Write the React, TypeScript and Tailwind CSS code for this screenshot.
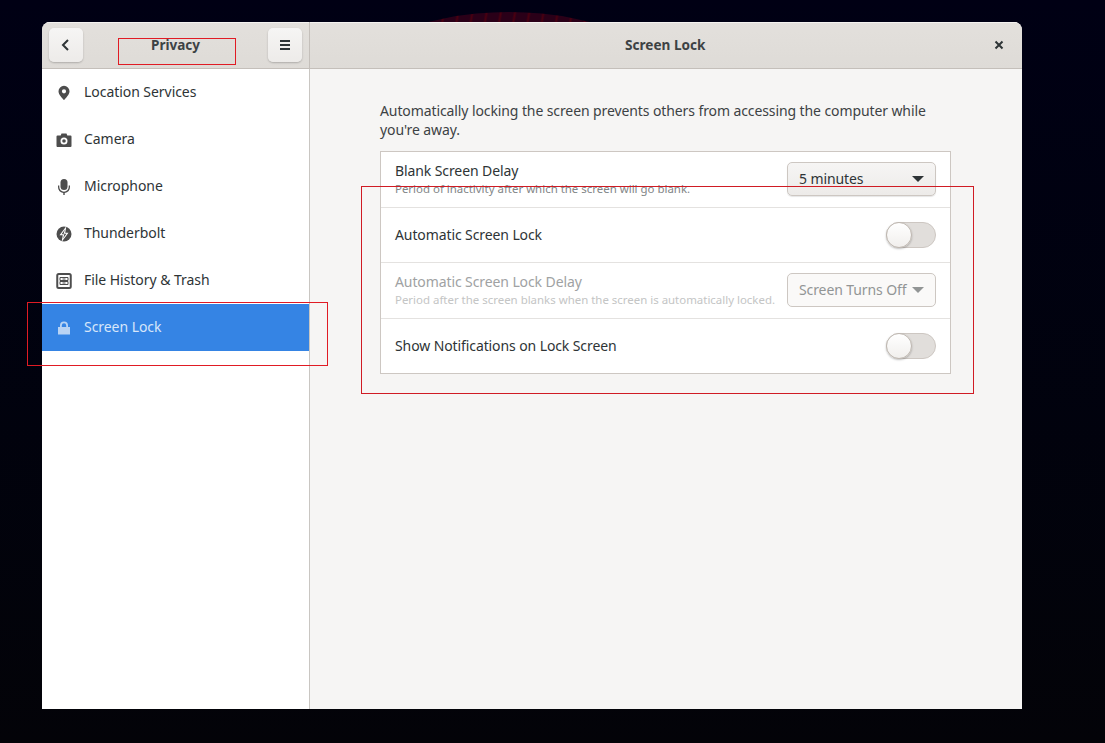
const font = "font-['Noto_Sans','Open_Sans',sans-serif]";

function LocationIcon() {
  return (
    <svg width="16" height="16" viewBox="0 0 16 16" fill="#4d4d4d">
      <path fillRule="evenodd" d="M8 .8a5.500 5.500 0 0 0-5.500 5.500C2.500 9.500 6 13 8 15.200c2-2.200 5.500-5.700 5.500-8.900A5.500 5.500 0 0 0 8 .8zm0 3.400a2.100 2.100 0 1 1 0 4.200 2.100 2.100 0 0 1 0-4.200z" />
    </svg>
  );
}

function CameraIcon() {
  return (
    <svg width="16" height="16" viewBox="0 0 16 16" fill="#4d4d4d">
      <path fillRule="evenodd" d="M5.500 1.500 4.700 3.500H1.500a1 1 0 0 0-1 1V14a1 1 0 0 0 1 1h13a1 1 0 0 0 1-1V4.500a1 1 0 0 0-1-1h-3.200l-.8-2h-5zM8 5.500a3.500 3.500 0 1 1 0 7 3.500 3.500 0 0 1 0-7zm0 1.700a1.800 1.800 0 1 0 0 3.600 1.800 1.800 0 0 0 0-3.600z" />
    </svg>
  );
}

function MicIcon() {
  return (
    <svg width="16" height="16" viewBox="0 0 16 16" fill="#4d4d4d">
      <rect x="4.500" y="0" width="7" height="11" rx="3.500" />
      <path d="M2 6.500h1.300V8a4.700 4.700 0 0 0 9.400 0V6.500H14V8a6 6 0 0 1-5.300 5.900V16H7.300v-2.100A6 6 0 0 1 2 8z" />
    </svg>
  );
}

function BoltIcon() {
  return (
    <svg width="16" height="16" viewBox="0 0 16 16">
      <circle cx="8" cy="8" r="7.500" fill="#4d4d4d" />
      <path d="M10.500 0 3.500 9.300h3.300L5.500 16l7-9.300H9.200z" fill="#fff" />
      <path d="M9 3.500 5.600 8.200h2.800L7 12.500l3.400-4.700H7.600z" fill="#4d4d4d" />
    </svg>
  );
}

function FileIcon() {
  return (
    <svg width="16" height="16" viewBox="0 0 16 16" fill="none" stroke="#4d4d4d">
      <rect x="1.250" y="1" width="13.500" height="14" rx="1.500" strokeWidth="2" />
      <path d="M4 7.500h8M4 4.500v3M12 4.500v3M4 4.500h8M4 8.500h8v3H4zM6.500 6h3M6.500 10h3" strokeWidth="1" />
    </svg>
  );
}

function LockIcon() {
  return (
    <svg width="16" height="16" viewBox="0 0 16 16" fill="#b8d3f4">
      <path fillRule="evenodd" d="M8 1.500a4 4 0 0 0-4 4V7H2v7.500h12V7h-2V5.500a4 4 0 0 0-4-4zM8 3.300a2.200 2.200 0 0 1 2.200 2.200V7H5.800V5.500A2.200 2.200 0 0 1 8 3.300z" />
    </svg>
  );
}

function HeaderButton({ children }: { children: React.ReactNode }) {
  return (
    <button className="flex h-[34px] w-[34px] items-center justify-center rounded-[5px] bg-gradient-to-b from-[#f6f5f4] to-[#edebe9] shadow-[0_1px_2px_rgba(0,0,0,0.22)]">
      {children}
    </button>
  );
}

function SidebarItem({ icon, label, active }: { icon: React.ReactNode; label: string; active?: boolean }) {
  return (
    <div className={`flex h-[47px] items-center gap-[12px] pl-[14px] text-[14px] tracking-[-0.05px] ${active ? "bg-[#3584e4] text-[#d7e6fa]" : "text-[#2e3436]"}`}>
      {icon}
      <span className="pb-[2px]">{label}</span>
    </div>
  );
}

function Switch() {
  return (
    <div className="h-[26px] w-[50px] rounded-full border border-[#cdc7c2] bg-[#e1dedb]">
      <div className="-ml-px -mt-px h-[26px] w-[26px] rounded-full border border-[#bfb8b1] bg-gradient-to-b from-white to-[#f1efed] shadow-[0_1px_2px_rgba(0,0,0,0.25)]" />
    </div>
  );
}

function ComboBox({ label, disabled }: { label: string; disabled?: boolean }) {
  return (
    <div className={`mb-[2px] flex h-[34px] w-[149px] items-center justify-between rounded-[5px] border border-[#cdc7c2] pl-[11px] pr-[11px] text-[14px] tracking-[-0.1px] ${disabled ? "bg-[#faf9f8] text-[#929595]" : "bg-gradient-to-b from-[#f6f5f4] to-[#edebe9] text-[#2e3436] shadow-[0_1px_1px_rgba(0,0,0,0.1)]"}`}>
      <span className="whitespace-nowrap">{label}</span>
      <svg width="12" height="6" viewBox="0 0 12 6" fill={disabled ? "#929595" : "#2e3436"}>
        <path d="M0 0h12L6 6z" />
      </svg>
    </div>
  );
}

function SettingRow({ title, subtitle, control, disabled, rowClass }: { title: string; subtitle?: string; control: React.ReactNode; disabled?: boolean; rowClass: string }) {
  return (
    <div className={`flex items-center justify-between pl-[14px] pr-[14px] ${rowClass}`}>
      <div className={`flex flex-col ${subtitle ? "pb-[3px]" : "pb-[2px]"}`}>
        <span className={`text-[14px] leading-[19px] tracking-[-0.1px] ${disabled ? "text-[#a0a2a3]" : "text-[#2e3436]"}`}>{title}</span>
        {subtitle && (
          <span className={`mt-px text-[11.450px] leading-[15px] ${disabled ? "text-[#c4c5c5]" : "text-[#828687]"}`}>{subtitle}</span>
        )}
      </div>
      {control}
    </div>
  );
}

export default function App() {
  return (
    <div className={`${font} relative h-[743px] w-[1105px] overflow-hidden bg-gradient-to-b from-[#000014] to-[#030308] pl-[42px] pt-[22px]`}>
      {/* wallpaper arc behind the window */}
      <div className="absolute left-[176px] top-[12px] h-[666px] w-[666px] rounded-full bg-[repeating-linear-gradient(100deg,#2a0018_0px,#2a0018_10px,#4a0010_12px,#2a0018_14px)]" />

      <div className="relative flex h-[687px] w-[980px] flex-col overflow-hidden rounded-t-[8px] bg-[#f6f5f4]">
        <header className="flex h-[47px] shrink-0 border-b border-[#c4bfba] bg-gradient-to-b from-[#e3e0dc] to-[#dedbd7] shadow-[inset_0_1px_0_#f4f2f0]">
          <div className="flex w-[268px] shrink-0 items-center justify-between border-r border-[#c4bfba] pl-[7px] pr-[7px]">
            <HeaderButton>
              <svg width="16" height="16" viewBox="0 0 16 16" fill="none" stroke="#2e3436" strokeWidth="2">
                <path d="M10 3 5 8l5 5" />
              </svg>
            </HeaderButton>
            <span className="text-[13.500px] font-bold text-[#3d4244]">Privacy</span>
            <HeaderButton>
              <svg width="16" height="16" viewBox="0 0 16 16" fill="#2e3436">
                <path d="M3 3h10v2H3zM3 7h10v2H3zM3 11h10v2H3z" />
              </svg>
            </HeaderButton>
          </div>
          <div className="flex flex-1 items-center pl-[315px] pr-[15px]">
            <span className="flex-1 text-[13.600px] font-bold text-[#3d4244]">Screen Lock</span>
            <svg width="16" height="16" viewBox="0 0 16 16" fill="none" stroke="#2e3436" strokeWidth="2">
              <path d="m4.500 4.500 7 7M11.500 4.500l-7 7" />
            </svg>
          </div>
        </header>

        <div className="flex min-h-0 flex-1">
          <aside className="w-[268px] shrink-0 border-r border-[#c9c6c2] bg-white">
            <SidebarItem icon={<LocationIcon />} label="Location Services" />
            <SidebarItem icon={<CameraIcon />} label="Camera" />
            <SidebarItem icon={<MicIcon />} label="Microphone" />
            <SidebarItem icon={<BoltIcon />} label="Thunderbolt" />
            <SidebarItem icon={<FileIcon />} label="File History & Trash" />
            <SidebarItem icon={<LockIcon />} label="Screen Lock" active />
          </aside>

          <main className="flex-1 pl-[70px] pt-[32px]">
            <p className="w-[571px] text-[14px] leading-[19px] tracking-[-0.1px] text-[#3d4244]">
              Automatically locking the screen prevents others from accessing the computer while you're away.
            </p>
            <div className="mt-[12px] w-[571px] border border-[#cdc7c2] bg-white">
              <SettingRow
                title="Blank Screen Delay"
                subtitle="Period of inactivity after which the screen will go blank."
                control={<ComboBox label="5 minutes" />}
                rowClass="h-[56px] border-b border-[#e4e2e0]"
              />
              <SettingRow title="Automatic Screen Lock" control={<Switch />} rowClass="h-[55px] border-b border-[#e4e2e0]" />
              <SettingRow
                title="Automatic Screen Lock Delay"
                subtitle="Period after the screen blanks when the screen is automatically locked."
                control={<ComboBox label="Screen Turns Off" disabled />}
                disabled
                rowClass="h-[56px] border-b border-[#e4e2e0]"
              />
              <SettingRow title="Show Notifications on Lock Screen" control={<Switch />} rowClass="h-[54px]" />
            </div>
          </main>
        </div>
      </div>

      {/* red annotation boxes drawn over the screenshot */}
      <div className="absolute left-[118px] top-[38px] h-[27px] w-[118px] border border-[#e01b24]" />
      <div className="absolute left-[27px] top-[302px] h-[64px] w-[301px] border border-[#e01b24]" />
      <div className="absolute left-[361px] top-[186px] h-[208px] w-[613px] border border-[#d01b24]" />
    </div>
  );
}
